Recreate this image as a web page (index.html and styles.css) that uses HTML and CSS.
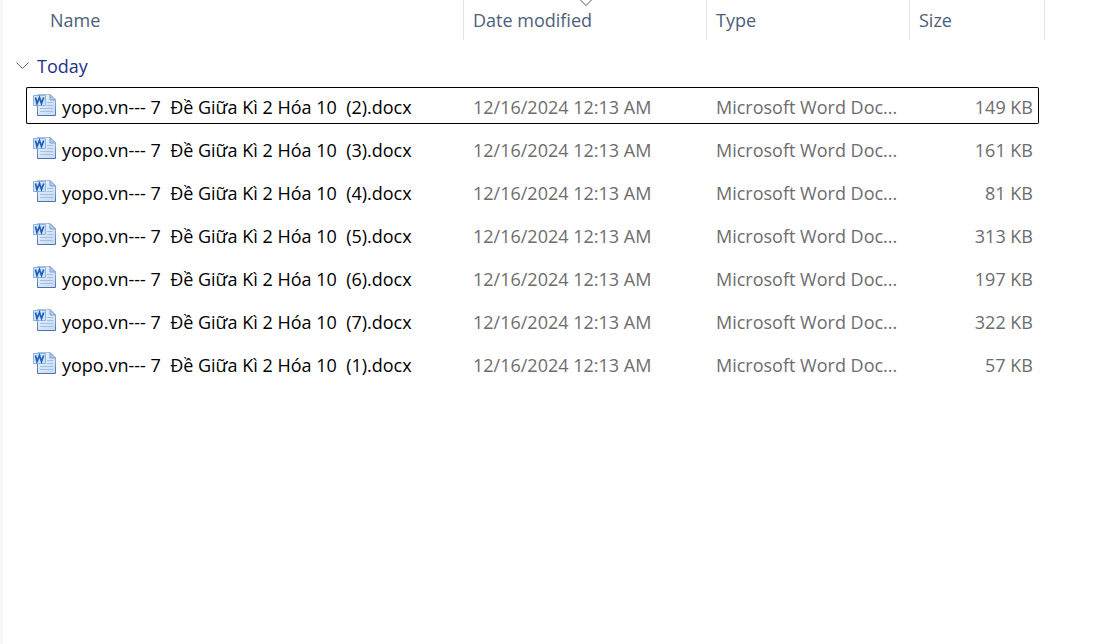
FILE: index.html
```
<!DOCTYPE html>
<html lang="en">
<head>
<meta charset="utf-8">
<title>Files</title>
<link rel="stylesheet" href="styles.css">
</head>
<body>
<svg class="sprite" aria-hidden="true">
  <defs>
    <linearGradient id="page" x1="0" y1="0" x2="1" y2="1">
      <stop offset="0" stop-color="#eef5fd"/><stop offset="1" stop-color="#c3d8f2"/>
    </linearGradient>
    <linearGradient id="edge" x1="0" y1="0" x2="0" y2="1">
      <stop offset="0" stop-color="#a9c1df"/><stop offset="1" stop-color="#4f73b0"/>
    </linearGradient>
    <symbol id="doc" viewBox="0 0 24 24">
      <path d="M4.500 1.500h12.500l5.500 5.500v15.500h-18z" fill="url(#page)" stroke="url(#edge)"/>
      <path d="M17 1.500v5.500h5.500z" fill="#b5cdea" stroke="#7f9fcc"/>
      <path d="M14 9.500h6M14 12.500h6M7 15.500h13M7 18.500h13" stroke="#a3bfe4" fill="none"/>
      <path d="M0.500 2.500h12v10h-12z" fill="#cfe3f9" stroke="#8fb3e2"/>
      <path d="M2.500 4.500l1.500 6 2.500-6 2 6 2.200-6" fill="none" stroke="#1f5fb8" stroke-width="1.700"/>
    </symbol>
  </defs>
</svg>
<main class="pane">
  <table class="files">
    <colgroup>
      <col class="col-lead"><col class="col-name"><col class="col-date"><col class="col-type"><col class="col-size"><col class="col-end">
    </colgroup>
    <thead>
      <tr>
        <td></td>
        <th class="head-name" scope="col"><button type="button">Name</button></th>
        <th class="head-sorted" scope="col" aria-sort="descending"><svg class="sort" viewBox="0 0 12 6" aria-hidden="true"><path d="M0.500 0l5.500 5.500 5.500-5.500"/></svg><button type="button">Date modified</button></th>
        <th scope="col"><button type="button">Type</button></th>
        <th class="head-size" scope="col"><button type="button">Size</button></th>
        <td class="head-end"></td>
      </tr>
    </thead>
    <tbody>
      <tr class="group">
        <th colspan="6" scope="rowgroup"><button type="button" aria-expanded="true"><svg class="chevron" viewBox="0 0 13 8" aria-hidden="true"><path d="M0.500 0.500l6 6 6-6"/></svg>Today</button></th>
      </tr>
      <tr class="file focused"><td></td><td class="name"><span><svg class="icon" aria-hidden="true"><use href="#doc"/></svg>yopo.vn--- 7  Đề Giữa Kì 2 Hóa 10  (2).docx</span></td><td>12/16/2024 12:13 AM</td><td>Microsoft Word Doc...</td><td class="size">149 KB</td><td></td></tr>
      <tr class="file"><td></td><td class="name"><span><svg class="icon" aria-hidden="true"><use href="#doc"/></svg>yopo.vn--- 7  Đề Giữa Kì 2 Hóa 10  (3).docx</span></td><td>12/16/2024 12:13 AM</td><td>Microsoft Word Doc...</td><td class="size">161 KB</td><td></td></tr>
      <tr class="file"><td></td><td class="name"><span><svg class="icon" aria-hidden="true"><use href="#doc"/></svg>yopo.vn--- 7  Đề Giữa Kì 2 Hóa 10  (4).docx</span></td><td>12/16/2024 12:13 AM</td><td>Microsoft Word Doc...</td><td class="size">81 KB</td><td></td></tr>
      <tr class="file"><td></td><td class="name"><span><svg class="icon" aria-hidden="true"><use href="#doc"/></svg>yopo.vn--- 7  Đề Giữa Kì 2 Hóa 10  (5).docx</span></td><td>12/16/2024 12:13 AM</td><td>Microsoft Word Doc...</td><td class="size">313 KB</td><td></td></tr>
      <tr class="file"><td></td><td class="name"><span><svg class="icon" aria-hidden="true"><use href="#doc"/></svg>yopo.vn--- 7  Đề Giữa Kì 2 Hóa 10  (6).docx</span></td><td>12/16/2024 12:13 AM</td><td>Microsoft Word Doc...</td><td class="size">197 KB</td><td></td></tr>
      <tr class="file"><td></td><td class="name"><span><svg class="icon" aria-hidden="true"><use href="#doc"/></svg>yopo.vn--- 7  Đề Giữa Kì 2 Hóa 10  (7).docx</span></td><td>12/16/2024 12:13 AM</td><td>Microsoft Word Doc...</td><td class="size">322 KB</td><td></td></tr>
      <tr class="file"><td></td><td class="name"><span><svg class="icon" aria-hidden="true"><use href="#doc"/></svg>yopo.vn--- 7  Đề Giữa Kì 2 Hóa 10  (1).docx</span></td><td>12/16/2024 12:13 AM</td><td>Microsoft Word Doc...</td><td class="size">57 KB</td><td></td></tr>
    </tbody>
  </table>
</main>
</body>
</html>
```
FILE: styles.css
```
* { box-sizing: border-box; }

body {
  margin: 0;
  background: #fff;
  color: #6d6d6d;
  font: 18px/24px "Segoe UI", "Open Sans", "Noto Sans", sans-serif;
}

.sprite { position: absolute; width: 0; height: 0; }

.pane {
  min-height: 100vh;
  border-left: 3px solid #f7f7f7;
  padding-left: 13px;
  overflow: hidden;
}

.files {
  table-layout: fixed;
  width: 1029px;
  margin-top: -6px;
  border-collapse: separate;
  border-spacing: 0 6px;
}

.col-lead { width: 10px; }
.col-name { width: 438px; }
.col-date { width: 243px; }
.col-type { width: 203px; }
.col-size { width: 129px; }
.col-end { width: 6px; }

th, td { padding: 0; font-weight: 400; text-align: left; white-space: pre; }

button {
  display: flex;
  align-items: center;
  padding: 0;
  border: 0;
  background: none;
  color: inherit;
  font: inherit;
}

thead th { position: relative; height: 40px; padding-left: 9px; border-right: 1px solid #e5e5e5; color: #4c607a; }
thead .head-name { padding-left: 24px; }
thead .head-size { border-right: 0; }
.head-end { border-right: 1px solid #e5e5e5; }

.sort {
  position: absolute;
  top: 0;
  left: calc(50% - 5px);
  width: 12px;
  height: 6px;
  fill: none;
  stroke: #555;
}

.group th { height: 35px; padding-top: 4px; color: #1e3287; }
.group button { gap: 8px; }
.chevron { width: 13px; height: 8px; fill: none; stroke: #6b6b6b; }

.file td { height: 37px; padding-top: 3px; }
.file td + td { padding-left: 9px; border: solid transparent; border-width: 1px 0; }
.file .name { padding-left: 6px; border-left-width: 1px; color: #000; }
.file .name span { display: flex; align-items: center; gap: 5px; }
.file .size { padding-right: 5px; border-right-width: 1px; text-align: right; }
.file td:last-child { padding: 0; border: 0; }
.icon { width: 24px; height: 24px; flex: none; margin-bottom: 4px; }

.focused .name, .focused .name ~ td { border-color: #000; }
.focused .name { border-radius: 2px 0 0 2px; }
.focused .size { border-radius: 0 2px 2px 0; }
```
